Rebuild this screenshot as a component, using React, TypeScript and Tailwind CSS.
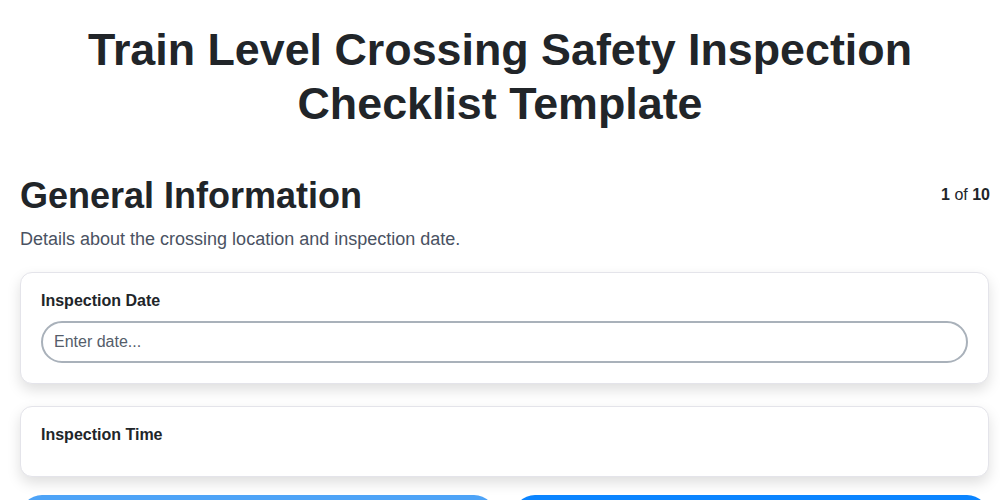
import React from "react";

const font = { fontFamily: '"Liberation Sans", Arial, sans-serif' };

const Field = ({ label, children }: { label: string; children?: React.ReactNode }) => (
  <div className="rounded-xl border border-[#e4e4ea] bg-white px-5 pt-[18px] pb-5 shadow-[0_6px_14px_rgba(0,0,0,0.13)]">
    <label className="mb-[11px] block text-base font-bold leading-[1.2] text-[#212529]">{label}</label>
    {children}
  </div>
);

export default function App() {
  return (
    <div className="min-h-screen bg-white text-[#212529]" style={font}>
      <h1 className="px-5 pt-[23px] text-center text-[44.8px] font-bold leading-[1.2] text-[#212529]">
        Train Level Crossing Safety Inspection Checklist Template
      </h1>

      <div className="pt-[43px] pl-5 pr-[10px]">
        <div className="flex items-center justify-between">
          <h2 className="text-[36px] font-bold leading-[1.2]">General Information</h2>
          <div className="text-base">
            <span className="font-bold">1</span> of <span className="font-bold">10</span>
          </div>
        </div>
        <p className="mt-[12px] text-[18px] leading-[1.2] text-[#4a5262]">
          Details about the crossing location and inspection date.
        </p>

        <div className="mt-[22px] mr-px flex flex-col gap-[22px]">
          <Field label="Inspection Date">
            <input
              type="text"
              placeholder="Enter date..."
              className="h-[42px] w-full rounded-full border-2 border-[#a9b1ba] bg-white px-[11px] text-base text-[#212529] outline-none placeholder:text-[#555d6a]"
            />
          </Field>
          <Field label="Inspection Time" />
        </div>

        <div className="mt-[18px] mr-px flex gap-[17px]">
          <button className="h-11 flex-1 rounded-full bg-[#4da3f7] text-base font-bold text-white">Previous</button>
          <button className="h-11 flex-1 rounded-full bg-[#0a84ff] text-base font-bold text-white">Next</button>
        </div>
      </div>
    </div>
  );
}
